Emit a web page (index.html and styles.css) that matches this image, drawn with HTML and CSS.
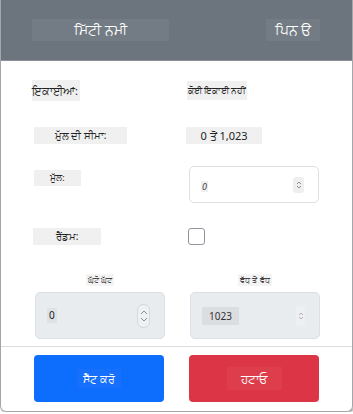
FILE: index.html
```html
<!DOCTYPE html>
<html lang="pa">
<head>
  <meta charset="UTF-8">
  <title>ਮਿੱਟੀ ਨਮੀ</title>
  <meta name="viewport" content="width=device-width, initial-scale=1.0">
  <link rel="stylesheet" href="styles.css">
</head>
<body>

<div class="modal">

  <!-- header -->
  <div class="modal-head">
    <span class="title">ਮਿੱਟੀ ਨਮੀ</span>
    <span class="pin">ਪਿਨ ੳ</span>
  </div>

  <div class="modal-body">

    <div class="row row-units">
      <span class="lbl">ਇਕਾਈਆਂ:</span>
      <span class="val small">ਕੋਈ ਇਕਾਈ ਨਹੀਂ</span>
    </div>

    <div class="row row-range">
      <span class="lbl wide">ਮੁੱਲ ਦੀ ਸੀਮਾ:</span>
      <span class="val range">0 ਤੋਂ 1,023</span>
    </div>

    <div class="row row-value">
      <span class="lbl mid">ਮੁੱਲ:</span>
      <div class="num">
        <span class="num-text">0</span>
        <span class="spin">
          <svg width="6" height="10" viewBox="0 0 6 10"><path d="M1 4 L3 2 L5 4 M1 6 L3 8 L5 6" fill="none" stroke="#777" stroke-width="0.8"/></svg>
        </span>
      </div>
    </div>

    <div class="row row-random">
      <span class="lbl rnd">ਰੈਂਡਮ:</span>
      <span class="check"></span>
    </div>

    <div class="row row-limits">
      <div class="limit">
        <span class="cap">ਘੱਟੋ ਘੱਟ</span>
        <div class="num off">
          <span class="num-text dark">0</span>
          <span class="spin big">
            <svg width="10" height="16" viewBox="0 0 10 16"><path d="M2 6 L5 3 L8 6 M2 10 L5 13 L8 10" fill="none" stroke="#8a8f95" stroke-width="1"/></svg>
          </span>
        </div>
      </div>
      <div class="limit">
        <span class="cap">ਵੱਧ ਤੋਂ ਵੱਧ</span>
        <div class="num off">
          <span class="num-text max">1023</span>
          <span class="spin tall">
            <svg width="6" height="10" viewBox="0 0 6 10"><path d="M1 4 L3 2 L5 4 M1 6 L3 8 L5 6" fill="none" stroke="#999" stroke-width="0.7"/></svg>
          </span>
        </div>
      </div>
    </div>

  </div>

  <!-- footer -->
  <div class="modal-foot">
    <button class="btn btn-blue"><span>ਸੈੱਟ ਕਰੋ</span></button>
    <button class="btn btn-red"><span>ਹਟਾਓ</span></button>
  </div>

</div>

</body>
</html>
```

FILE: styles.css
```css
body {
  margin: 0;
  padding: 0;
  background: #fff;
  font-family: "Noto Sans", "DejaVu Sans", sans-serif;
  color: #222;
}

.modal {
  width: 351px;
  height: 411px;
  border: 1px solid #a4a7aa;
  border-top: none;
  border-radius: 0 0 6px 6px;
  box-shadow: 1px 1px 2px rgba(0, 0, 0, 0.35);
  overflow: hidden;
  box-sizing: content-box;
}

.modal-head {
  height: 61px;
  background: #6c757d;
  border-bottom: 1px solid #8a9097;
  display: flex;
  align-items: center;
  padding-left: 31px;
  box-sizing: border-box;
}

.title, .pin {
  background: #737c85;
  color: #fff;
  font-size: 14px;
  height: 22px;
  line-height: 22px;
  text-align: center;
}

.title {
  width: 137px;
}

.pin {
  width: 54px;
  margin-left: 97px;
}

.modal-body {
  padding: 17px 0 0 33px;
}

.row {
  display: grid;
  grid-template-columns: 130px 130px;
  column-gap: 25px;
  align-items: center;
}

.lbl {
  background: #f0f0f0;
  font-size: 11px;
  justify-self: start;
  text-align: center;
}

.val {
  background: #f0f0f0;
  justify-self: start;
}

.row-units {
  height: 24px;
}

.row-units .lbl {
  width: 48px;
  height: 21px;
  line-height: 21px;
  margin-left: -2px;
  text-align: left;
}

.small {
  font-size: 9px;
  height: 19px;
  line-height: 19px;
  width: 60px;
  text-align: center;
  margin-left: -2px;
  white-space: nowrap;
}

.row-range {
  height: 22px;
  margin-top: 22px;
}

.wide {
  width: 93px;
  height: 17px;
  line-height: 17px;
  font-size: 10px;
}

.range {
  font-size: 11px;
  width: 76px;
  height: 17px;
  line-height: 17px;
  text-align: center;
  margin-left: -3px;
}

.row-value {
  margin-top: 20px;
  align-items: start;
}

.mid {
  width: 47px;
  height: 16px;
  line-height: 16px;
  font-size: 9px;
  margin-top: 4px;
}

.num {
  height: 37px;
  border: 1px solid #dcdfe3;
  border-radius: 5px;
  display: flex;
  align-items: center;
  justify-content: space-between;
  padding: 0 14px 0 11px;
  box-sizing: border-box;
  background: #fff;
}

.num-text {
  background: #efefef;
  font-size: 9px;
  font-style: italic;
  color: #444;
  padding: 0 1px;
  height: 11px;
  line-height: 11px;
  margin-top: 4px;
}

.spin {
  background: #efefef;
  border-radius: 3px;
  width: 11px;
  height: 16px;
  display: flex;
  align-items: center;
  justify-content: center;
}

.row-random {
  height: 17px;
  margin-top: 25px;
}

.rnd {
  width: 68px;
  height: 17px;
  line-height: 17px;
  font-size: 10px;
  margin-left: -1px;
}

.check {
  width: 15px;
  height: 15px;
  border: 1px solid #8f959b;
  border-radius: 3px;
  margin-left: -1px;
}

.row-limits {
  margin-top: 29px;
  margin-left: 1px;
  align-items: start;
}

.limit {
  display: flex;
  flex-direction: column;
  align-items: center;
  width: 130px;
}

.cap {
  background: #f4f4f4;
  font-size: 8px;
  height: 12px;
  line-height: 12px;
  padding: 0 2px;
  color: #444;
}

.limit .num {
  width: 130px;
  height: 47px;
  margin-top: 6px;
}

.off {
  background: #e9ecef;
}

.off .num-text {
  font-style: normal;
  margin-top: 0;
}

.dark {
  background: #dfe1e4;
  color: #222;
  font-size: 10px;
  height: 15px;
  line-height: 15px;
  padding: 0 2px;
}

.max {
  background: #dcdde0;
  color: #333;
  font-size: 10px;
  width: 37px;
  height: 18px;
  line-height: 18px;
  text-align: center;
  padding: 0;
}

.big {
  background: #eef0f2;
  border: 1px solid #d6d9dc;
  border-radius: 6px;
  width: 11px;
  height: 22px;
  margin-right: 0;
}

.tall {
  background: #edeff1;
  height: 20px;
  width: 9px;
}

.modal-foot {
  margin-top: 7px;
  border-top: 1px solid #dcdfe2;
  padding: 8px 0 0 33px;
  display: flex;
  gap: 25px;
}

.btn {
  width: 130px;
  height: 47px;
  border: none;
  border-radius: 4px;
  color: #fff;
  font-family: "Noto Sans", "DejaVu Sans", sans-serif;
  font-size: 11px;
  padding: 0;
}

.btn span {
  display: inline-block;
  padding: 2px 6px;
}

.btn-blue {
  background: #0d6efd;
}

.btn-blue span {
  background: #1670fb;
}

.btn-red {
  background: #dc3545;
  font-size: 12px;
}

.btn-red span {
  background: #de3e4c;
  padding: 3px 14px;
}
```
